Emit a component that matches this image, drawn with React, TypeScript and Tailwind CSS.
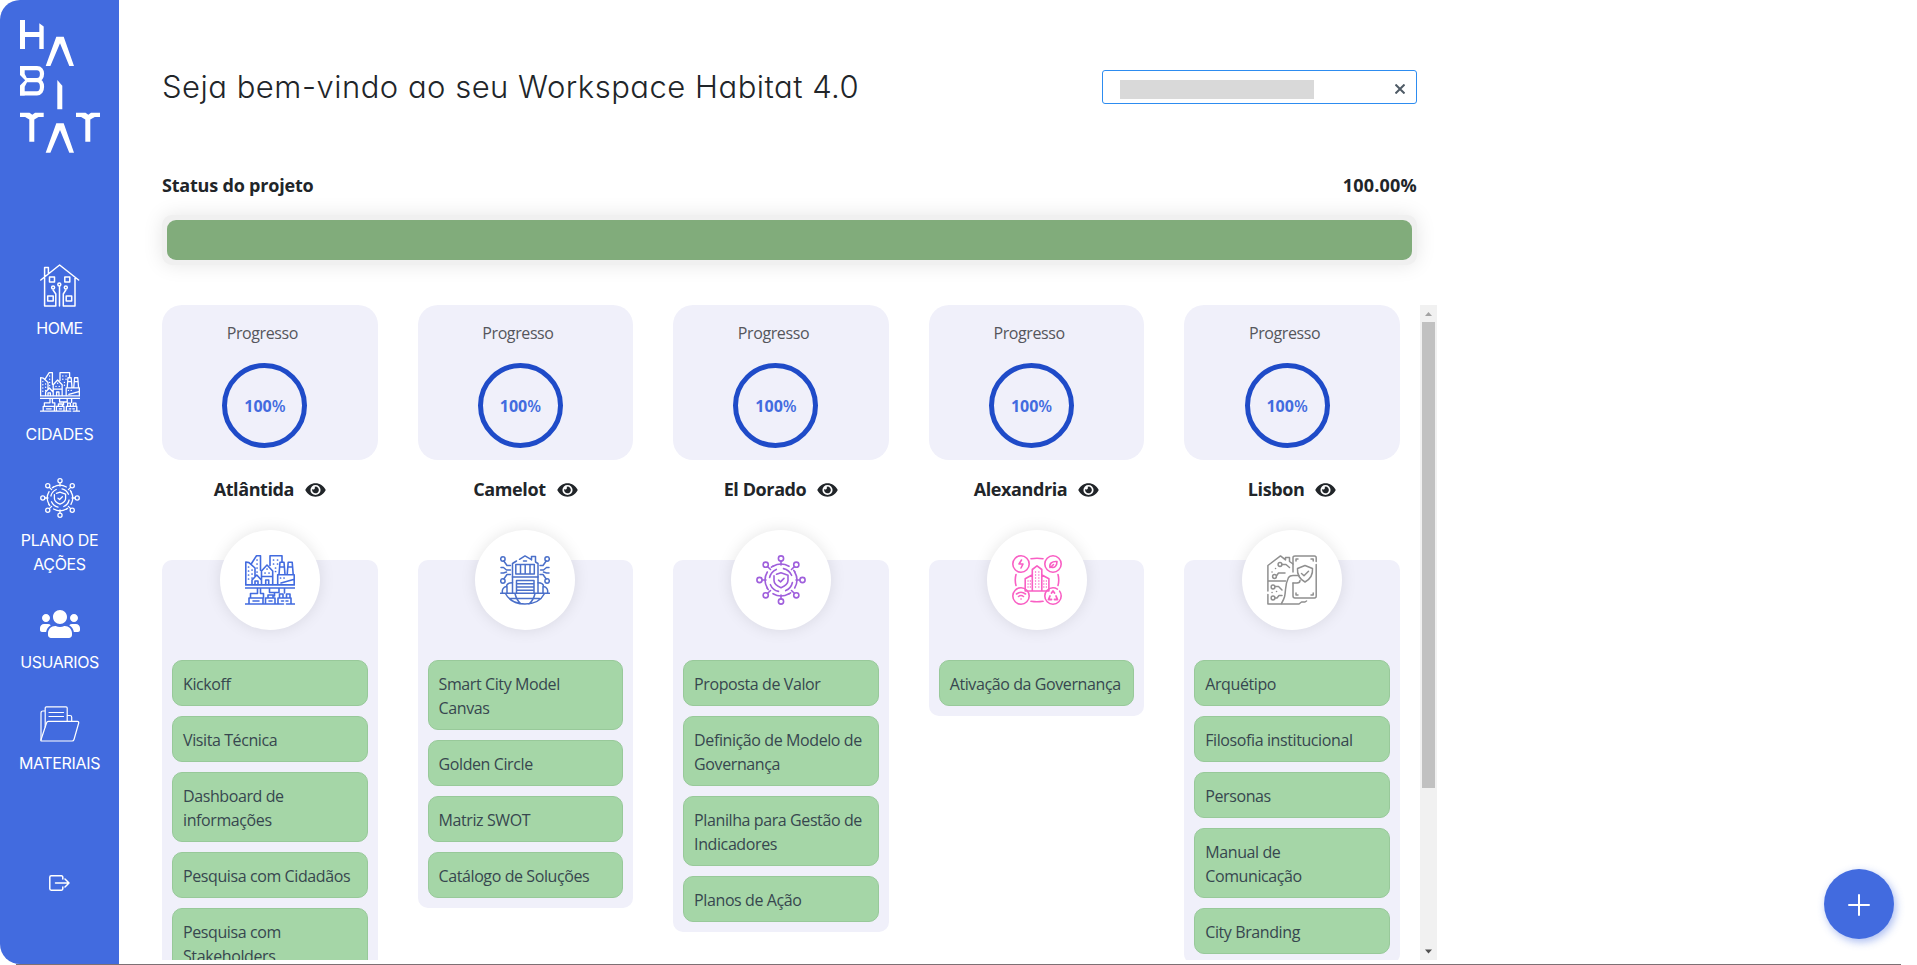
import type { ReactNode } from "react";
import { FaEye, FaUsers } from "react-icons/fa";

const strokeProps = {
  fill: "none",
  stroke: "currentColor",
  strokeLinecap: "round" as const,
  strokeLinejoin: "round" as const,
};

function Logo() {
  return (
    <svg width="80" height="134" viewBox="20 20 80 134" fill="#fff">
      <path d="M20 20h5v12h14.300V23.200l4.400 3.400V49h-4.400V37H25v12h-5z" />
      <path d="M56.300 36.700h7.400L74 66h-4.700L60 43.300 50.400 66h-4.700z" />
      <path
        d="M20 68.200h17c3.400 0 5 2.600 5 5.600s-1.800 6.400-5 6.400H26M37 80.200c3.400 0 5 3 5 6.600s-1.800 6.500-5 6.500H20"
        fill="none"
        stroke="#fff"
        strokeWidth="4.200"
      />
      <path d="M20 66h4.700v8l3.300 6.200-3.300 6.500V95.400H20V85.500l5.200-5.300-5.200-5.300z" />
      <path d="M57.300 80l5 5.800v23.500h-5z" />
      <path d="M20 112.700h9.500l2.800 2 2.700-2h8.700v4.400h-5.200l-4.200 2.500v22.200h-5v-22.200l-4.200-2.500H20z" />
      <path d="M76 112.700h9.500l2.800 2 2.700-2h9v4.400h-5.200l-4.500 2.500v22.200h-5v-22.200l-4.200-2.500H76z" />
      <path d="M56.300 123.300h7.400L74 152.700h-4.700L60 130l-9.600 22.700h-4.700z" />
    </svg>
  );
}

function HomeIcon() {
  return (
    <svg width="40" height="43" viewBox="0 0 40 43" {...strokeProps} strokeWidth="1.500">
      <path d="M.8 16L19.600 1 38.600 16M4.600 12.500V3.500h3.800v6M4.600 14v28h11.200V30l-2.700-4M35 14v28H23.300V30l2.500-4M19.500 22.500V42" />
      <rect x="9.500" y="13" width="5" height="5" />
      <rect x="24.800" y="13" width="5" height="5" />
      <rect x="7.700" y="32" width="5.500" height="5" />
      <rect x="26.200" y="32" width="5.500" height="5" />
      <circle cx="19.300" cy="20.500" r="1.500" />
      <circle cx="13.100" cy="23.500" r="1.500" />
      <circle cx="25.800" cy="23.500" r="1.500" />
    </svg>
  );
}

function CityIcon({ size }: { size: number }) {
  return (
    <svg width={size} height={size} viewBox="0 0 50 50" {...strokeProps} strokeWidth="1.600">
      <path d="M.8 29.500V7l3.200.6 6 5.400v8M6.500 8.500L11.500.8h4v14.500M16.500 29.500V16l5.500-6 5.700 6v13.500M16.500 21.500h11M25 10.500V.8h12v6M34 19.500l1-12.300h4l1 12.300M42.200 19.500l1-12.300h4l1 12.300M35 12h4.500M43 12h4.500M32.700 29.500V19.800h16.500v9.700M36 28l12.500-3.500M7 29.500V25l4.800-5 4.500 5M10 29.500V26h3v3.500M20.700 29.500V25h3v4.500" />
      <path d="M.5 29.900h49M.5 33h49M.5 49h38M41.500 49h8M12.500 33v5.500M15.500 33v5.500M24.500 33v4.500h5V41M34 33v4.500h-5M39.500 33v5M12.500 38.500H5.500V43M15.500 38.500h3V43M4 49v-6h14v6M20.500 49v-6H30v6M23 43v-3h5v3M33 49v-6h13v6M34.500 43v-4H38v4M41.500 43v-4H45v4M8 46h6M24 46h3M36.500 46h2M41 46h2" />
      <path
        strokeWidth="1.700"
        d="M3.500 12h.1M3.500 16h.1M3.500 20h.1M3.500 24h.1M7 15h.1M7 19h.1M7 23h.1M12 5h.1M12 9h.1M12 13h.1M12 17h.1M28.500 5h.1M32.500 5h.1M28.500 9h.1M32.500 9h.1M30.500 13h.1M30.500 16.500h.1M22 14h.1M20 18h.1M24 18h.1M35.500 23h.1M39 23h.1"
      />
    </svg>
  );
}

const axes = [0, 90, 180, 270];

function NetworkIcon({ size }: { size: number }) {
  return (
    <svg width={size} height={size} viewBox="0 0 50 50" {...strokeProps} strokeWidth="1.600">
      {axes.map((a) => (
        <g key={a} transform={`rotate(${a} 25 25)`}>
          <circle cx="25" cy="3.500" r="2.600" />
          <path d="M25 6.200V10" />
          <path d="M17 11.300A16 16 0 0 1 33 11.300" />
          <circle cx="40.300" cy="9.700" r="2.600" />
          <path d="M38.300 11.700L35.500 14.500" />
          <path d="M27.500 13.600A11.600 11.600 0 0 1 35.600 20.300" />
          <path d="M37.800 15.400A16 16 0 0 1 38.900 17" />
        </g>
      ))}
      <path d="M20.500 19.200L25 17.700l7 2.500v5.300c0 3.500-3.500 5.700-7 7.200-3.500-1.500-7-3.700-7-7.200v-4.800M22.500 25.200l2 1.700 3.500-3.500" />
    </svg>
  );
}

function SmartHouseIcon() {
  return (
    <svg width="50" height="50" viewBox="0 0 50 50" {...strokeProps} strokeWidth="1.500">
      <path d="M12.500 38V8.500L16.500 6M19.500 4.300L25 .9l6 3.400M31.500 5V1.500h4V7l2.500 1.500V38" />
      <path d="M15.800 19V9.500h18.500V19zM20.500 9.500V19M25.200 9.500V19M30 9.500V19M23.500 6h3M12.500 22h25.500M16.500 38V25.500h17.500V38M16.500 28.800H34M16.500 32H34M16.500 35.200H34" />
      <circle cx="2.900" cy="4" r="2.200" />
      <circle cx="2.900" cy="26" r="2.200" />
      <circle cx="47.100" cy="4" r="2.200" />
      <circle cx="47.100" cy="26" r="2.200" />
      <path d="M3.800 6L7 10.500h3.500M1 12.500h2.500L6.500 15h4M1 18h2.500l3-1M3.800 24L7 19.500h3.500M46.200 6L43 10.500h-3M49 12.500h-2.500L43.500 15h-3M49 18h-2.500l-3-1M46.200 24L43 19.500h-3" />
      <path d="M.6 38.200H16.500M49.400 38.200H34M16 38.200h18M2.500 38c-.8-3.500 1-6 4-6.500 0-2.500 2.500-3.800 6-3.800M47.500 38c.8-3.500-1-6-4-6.500 0-2.500-2.500-3.800-5.500-3.800M7 31.500V38M43 31.500V38M5.500 38.500c3.500 7 10 10.500 19.500 10.500s16-3.500 19.500-10.500M15 38.500c1 4.500 3 8 6 10.500M35 38.500c-1 4.500-3 8-6 10.500M10.500 43.500h29" />
    </svg>
  );
}

function SustainableCityIcon() {
  return (
    <svg width="50" height="50" viewBox="0 0 50 50" {...strokeProps} strokeWidth="1.600">
      <circle cx="9" cy="9" r="8.200" />
      <circle cx="41" cy="9" r="8.200" />
      <circle cx="9" cy="41" r="8.200" />
      <circle cx="41" cy="41" r="8.200" strokeDasharray="43 3" />
      <path d="M19 3.700q6-1 12 0M19 46.300q6 1 12 0M4 19.500q-1.500 5.500 0 11M46 19.500q1.500 5.500 0 11" />
      <path d="M20.300 36V14.500L25 10.800l4.800 3.700V36M20 20l-6.800 3.800V36h23.700V23.800L30 20" />
      <path
        strokeWidth="1.300"
        d="M23.500 17h.1M26.800 17h.1M23.500 20h.1M26.800 20h.1M23.500 23h.1M26.800 23h.1M23.500 26h.1M26.800 26h.1M23.500 29h.1M26.800 29h.1M23.500 32h.1M26.800 32h.1M16 26h.1M16 29h.1M16 32h.1M18.300 26h.1M18.300 29h.1M18.300 32h.1M31.800 26h.1M31.800 29h.1M31.800 32h.1M34.300 26h.1M34.300 29h.1M34.300 32h.1"
      />
      <path d="M9.500 5L7 9h4l-2 4M38 12.500c-1-4 2-6.500 7-6 0 4.500-2.500 7-6 5.500l2.500-2.500" />
      <path d="M4.500 39q4.500-3.500 9 0M6.500 41.500q2.500-2 5 0M9 44h.1" />
      <path strokeWidth="1.800" d="M39.500 38l1.500-2 1.500 2M38 41l-1.500 3.500h3M44 41l1.500 3.500h-3" />
    </svg>
  );
}

function HouseShieldIcon() {
  return (
    <svg width="50" height="50" viewBox="0 0 50 50" {...strokeProps} strokeWidth="1.500">
      <path d="M.9 36V10.500L13.500.9l5 4V2.500h4v4L26 9M.9 26H18.500M.9 39.500V49H32l2.500-2H38l1.500-1" />
      <circle cx="13" cy="9.500" r="1.900" />
      <path d="M15 9.500h4l3.500 3M9.700 20.500L11.500 18H18M8 31.500h3.500l3.500 3.500M8 43h2l2-2.500h3" />
      <circle cx="7.500" cy="21.500" r="1.900" />
      <circle cx="6" cy="32" r="1.900" />
      <circle cx="6" cy="43" r="1.900" />
      <path d="M8.500 13.500h.1M5 17h.1M5 37.500h.1M9.500 36.500h.1" />
      <path d="M26 17V2.700C26 1.500 26.700.9 28 .9h19.500c1 0 1.700.7 1.700 1.800V6.500M49.200 9.500V41c0 1.200-.7 2-1.700 2H28c-1.300 0-2-.8-2-2V28" />
      <path d="M29 6V4h2M44 4h2.200v2M29 38v2h2M44 40h2.200v-2" />
      <path d="M38 10.500l7.500 3c.5 6-2 10.500-7.500 13.500-5.500-3-8-7.500-7.500-13.500zM34.500 18.500l2.500 2.200 4.500-4.500" />
      <path d="M14.500 48.500c3.500-6 3.500-8 4-14 .4-5 1.500-9 3-12 1-1.500 2.500-2 4.500-2h6M26 28h4c2 0 3-1 3-2.500" />
    </svg>
  );
}

function FolderIcon() {
  return (
    <svg width="40" height="36" viewBox="0 0 40 36" {...strokeProps} strokeWidth="1.200">
      <path d="M1 34V7c0-1.300.8-2 2-2h2M5.200 21V2c0-.8.500-1.200 1.200-1.200H26c.8 0 1.200.4 1.200 1.200v13M27.500 9.500H30c1 0 1.700.7 1.700 1.700V15" />
      <path d="M1.500 35c-.7 0-.7-.6-.5-1.300L6.500 17c.4-1.200 1-1.600 2-1.600h29c1 0 1.400.6 1.200 1.600L34 33.500c-.3 1-.9 1.500-1.800 1.500z" />
      <path d="M9 6.500h14.500M9 10.500h14.500" />
    </svg>
  );
}

function ExitIcon() {
  return (
    <svg width="21" height="16" viewBox="0 0 21 16" {...strokeProps} strokeWidth="1.500">
      <path d="M13.800 4V2.200c0-.9-.5-1.400-1.300-1.400H2.200C1.300.8.800 1.300.800 2.200v11.600c0 .9.500 1.400 1.400 1.400h10.300c.8 0 1.300-.5 1.300-1.400V12M6.500 8H20M16 4l4 4-4 4" />
    </svg>
  );
}

function NavItem({ icon, label, className }: { icon: ReactNode; label: string; className: string }) {
  return (
    <a className={`flex w-full flex-col items-center ${className}`}>
      {icon}
      <span className="w-[100px] text-center leading-[24px]">{label}</span>
    </a>
  );
}

function Sidebar() {
  return (
    <nav
      className="flex h-[964px] w-[119px] shrink-0 flex-col items-center rounded-l-[20px] bg-[#426bdf] pt-5 text-[16px] text-white"
      style={{ fontFamily: "Inter, sans-serif" }}
    >
      <Logo />
      <NavItem className="mt-[110px] gap-[9px] tracking-[-0.4px]" icon={<HomeIcon />} label="HOME" />
      <NavItem className="mt-[32px] gap-[10px] tracking-[-0.2px]" icon={<CityIcon size={40} />} label="CIDADES" />
      <NavItem className="mt-[32px] gap-[10px] tracking-[-0.350px]" icon={<NetworkIcon size={40} />} label="PLANO DE AÇÕES" />
      <NavItem className="mt-[32px] gap-[10px] tracking-[-0.400px]" icon={<FaUsers size={40} className="h-[32px]" />} label="USUARIOS" />
      <NavItem className="mt-[32px] gap-[9px] tracking-[-0.350px]" icon={<FolderIcon />} label="MATERIAIS" />
      <a className="mt-[100px]">
        <ExitIcon />
      </a>
    </nav>
  );
}

type Stage = { name: string; icon: ReactNode; color: string; tasks: string[] };

const stages: Stage[] = [
  {
    name: "Atlântida",
    icon: <CityIcon size={50} />,
    color: "text-[#426bdf]",
    tasks: ["Kickoff", "Visita Técnica", "Dashboard de informações", "Pesquisa com Cidadãos", "Pesquisa com Stakeholders"],
  },
  {
    name: "Camelot",
    icon: <SmartHouseIcon />,
    color: "text-[#4a6fc9]",
    tasks: ["Smart City Model Canvas", "Golden Circle", "Matriz SWOT", "Catálogo de Soluções"],
  },
  {
    name: "El Dorado",
    icon: <NetworkIcon size={50} />,
    color: "text-[#9f5fdc]",
    tasks: ["Proposta de Valor", "Definição de Modelo de Governança", "Planilha para Gestão de Indicadores", "Planos de Ação"],
  },
  {
    name: "Alexandria",
    icon: <SustainableCityIcon />,
    color: "text-[#f95fc4]",
    tasks: ["Ativação da Governança"],
  },
  {
    name: "Lisbon",
    icon: <HouseShieldIcon />,
    color: "text-[#8f8f8f]",
    tasks: ["Arquétipo", "Filosofia institucional", "Personas", "Manual de Comunicação", "City Branding"],
  },
];

function StageColumn({ stage }: { stage: Stage }) {
  return (
    <section className="flex min-w-0 flex-col items-center">
      <div className="flex h-[155px] w-full flex-col items-center rounded-[20px] bg-[#f0f0fa] pt-[16px]">
        <span className="mr-[15px] text-[16px] leading-[24px] tracking-[-0.4px] text-[#55565c]">Progresso</span>
        <div className="mt-[18px] mr-[10px] flex size-[85px] items-center justify-center rounded-full border-[5px] border-[#1f4bc8] text-[16px] text-[#426bdf]">
          <span className="font-bold">100</span>
          <span className="font-semibold">%</span>
        </div>
      </div>
      <h3 className="mt-[16px] flex h-[27px] items-center gap-[11px] text-[18px] font-bold tracking-[-0.400px] text-[#212529]">
        {stage.name}
        <FaEye className="h-[18px] w-[21px]" />
      </h3>
      <div className={`z-10 mt-[27px] flex size-[100px] items-center justify-center rounded-full bg-white shadow-[0_0_16px_rgba(0,0,0,0.1)] ${stage.color}`}>
        {stage.icon}
      </div>
      <ul className="-mt-[70px] flex w-full flex-col gap-[10px] rounded-[10px] bg-[#f0f0fa] px-[10px] pt-[100px] pb-[10px]">
        {stage.tasks.map((task) => (
          <li
            key={task}
            className="rounded-[10px] border border-[#98c99a] bg-[#a5d6a7] px-[10px] pt-[11px] pb-[9px] text-[16px] leading-[24px] tracking-[-0.400px] text-[#37474f]"
          >
            {task}
          </li>
        ))}
      </ul>
    </section>
  );
}

function ScrollTrack() {
  return (
    <div className="flex h-[655px] w-[17px] shrink-0 flex-col items-center bg-[#f1f1f1]">
      <svg width="17" height="17" viewBox="0 0 17 17" fill="#a3a3a3">
        <path d="M5 11l3.500-4L12 11z" />
      </svg>
      <div className="h-[466px] w-[13px] bg-[#c1c1c1]" />
      <svg className="mt-auto" width="17" height="17" viewBox="0 0 17 17" fill="#505050">
        <path d="M5 6.500h7l-3.500 4z" />
      </svg>
    </div>
  );
}

export default function App() {
  return (
    <div className="flex h-[965px] w-full flex-col overflow-hidden bg-white" style={{ fontFamily: '"Open Sans", "Noto Sans", sans-serif' }}>
      <div className="flex h-[964px]">
        <Sidebar />
        <main className="ml-[43px] flex w-[1275px] shrink-0 flex-col pt-[65px]">
          <header className="flex h-[44px] w-[1255px] items-center justify-between">
            <h1
              className="text-[31px] leading-[44px] font-light tracking-[0.500px] whitespace-nowrap text-[#212529]"
              style={{ fontFamily: "Inter, sans-serif", fontFeatureSettings: '"cv11"' }}
            >
              Seja bem-vindo ao seu Workspace Habitat 4.0
            </h1>
            <div className="flex h-[34px] w-[315px] items-center justify-between rounded-[3px] border border-[#2d8cf0] pr-[11px] pl-[17px]">
              <div className="mt-[4px] h-[19px] w-[194px] bg-[#d9d9d9]" />
              <svg className="mt-[4px]" width="10" height="10" viewBox="0 0 10 10" fill="none" stroke="#4f5b66" strokeWidth="2">
                <path d="M.5.5l9 9M9.500.5l-9 9" />
              </svg>
            </div>
          </header>
          <div className="mt-[63px] flex h-[27px] w-[1255px] items-center justify-between text-[18px] font-bold text-[#212529]">
            <span className="tracking-[-0.200px]">Status do projeto</span>
            <span className="tracking-[0.200px]">100.00%</span>
          </div>
          <div className="mt-[16px] h-[50px] w-[1255px] rounded-[10px] bg-[#f0f0f0] p-[5px] shadow-[0_0_20px_rgba(0,0,0,0.1)]">
            <div className="h-[40px] rounded-[9px] bg-[#81ac7b]" />
          </div>
          <div className="mt-[40px] flex h-[655px] justify-between overflow-hidden">
            <div className="grid w-[1238px] grid-cols-5 items-start gap-x-[39.800px]">
              {stages.map((stage) => (
                <StageColumn key={stage.name} stage={stage} />
              ))}
            </div>
            <ScrollTrack />
          </div>
        </main>
        <button className="mt-auto mr-[23px] mb-[25px] ml-auto flex size-[70px] items-center justify-center rounded-full bg-[#426bdf] shadow-[2px_3px_8px_rgba(66,107,223,0.45)]">
          <svg className="mt-[2px]" width="22" height="22" viewBox="0 0 22 22" stroke="#fff" strokeWidth="2" strokeLinecap="round">
            <path d="M1 11h20M11 1v20" />
          </svg>
        </button>
      </div>
      <div className="ml-[16px] h-px w-[1885px] bg-[#7d7074]" />
    </div>
  );
}
